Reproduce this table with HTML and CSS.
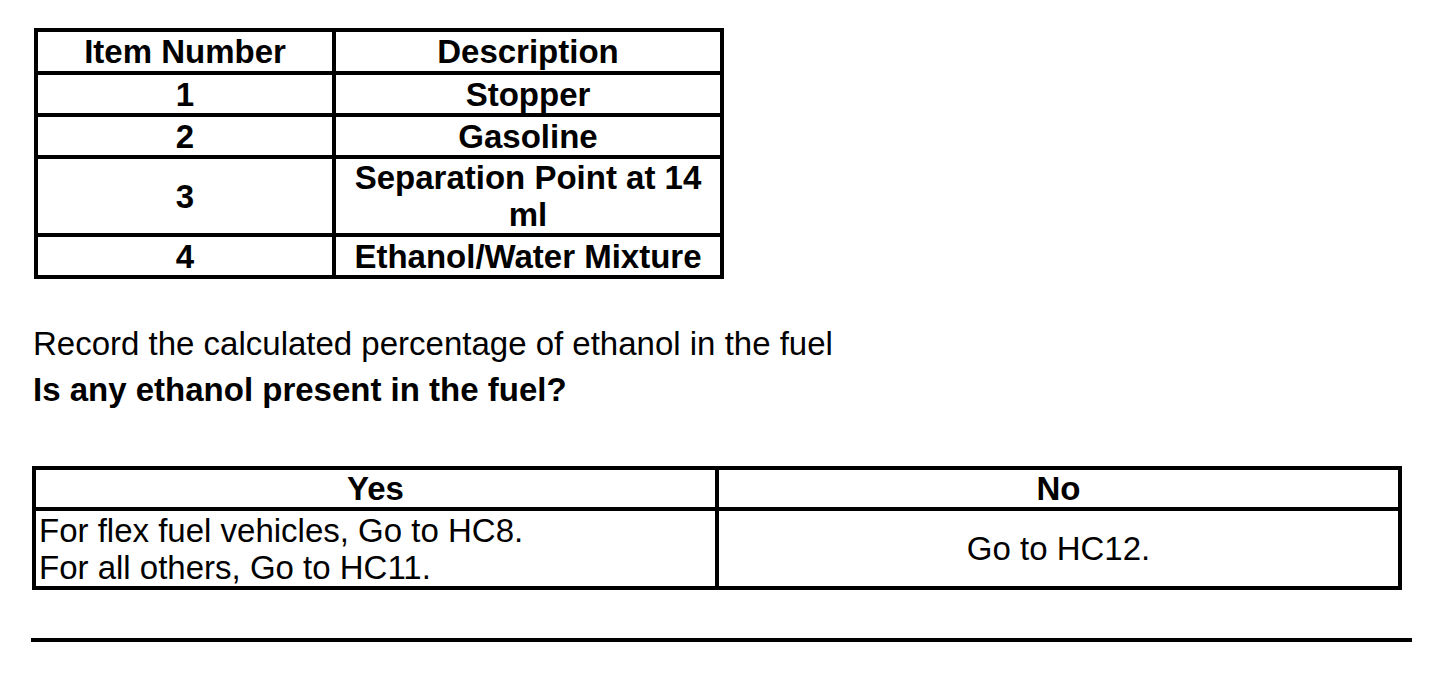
FILE: index.html
```html
<!DOCTYPE html>
<html lang="en">
<head>
<meta charset="utf-8">
<title>Ethanol test</title>
<link rel="stylesheet" href="styles.css">
</head>
<body>
<div class="page">
  <table class="items">
    <colgroup><col class="c-num"><col class="c-desc"></colgroup>
    <thead>
      <tr><th>Item Number</th><th>Description</th></tr>
    </thead>
    <tbody>
      <tr><td>1</td><td>Stopper</td></tr>
      <tr><td>2</td><td>Gasoline</td></tr>
      <tr><td>3</td><td>Separation Point at 14 ml</td></tr>
      <tr><td>4</td><td>Ethanol/Water Mixture</td></tr>
    </tbody>
  </table>

  <p class="instr">Record the calculated percentage of ethanol in the fuel</p>
  <p class="question">Is any ethanol present in the fuel?</p>

  <table class="answers">
    <colgroup><col class="c-half"><col class="c-half"></colgroup>
    <thead>
      <tr><th>Yes</th><th>No</th></tr>
    </thead>
    <tbody>
      <tr>
        <td class="left">For flex fuel vehicles, Go to HC8.<br>For all others, Go to HC11.</td>
        <td>Go to HC12.</td>
      </tr>
    </tbody>
  </table>

  <div class="rule"></div>
</div>
</body>
</html>
```

FILE: styles.css
```css
html, body {
  margin: 0;
  padding: 0;
  background: #fff;
}

body {
  font-family: "Liberation Sans", Arial, sans-serif;
  color: #000;
  font-size: 33px;
  line-height: 37px;
}

.page {
  display: flex;
  flex-direction: column;
  align-items: flex-start;
  padding: 28px 0 0 34px;
}

table {
  border-collapse: collapse;
  table-layout: fixed;
}

th, td {
  border: 4px solid #000;
  padding: 0;
  text-align: center;
  vertical-align: middle;
  font-weight: bold;
}

.items {
  width: 686px;
}

.items .c-num {
  width: 298px;
}

.items .c-desc {
  width: 388px;
}

.items td,
.items th {
  height: 38px;
}

.items th {
  height: 39px;
}

.instr {
  margin: 46px 0 0 -1px;
  font-weight: normal;
}

.question {
  margin: 9px 0 0 -1px;
  font-weight: bold;
}

.answers {
  margin: 58px 0 0 -2px;
  width: 1366px;
}

.answers .c-half {
  width: 683px;
}

.answers th {
  height: 36px;
}

.answers td {
  font-weight: normal;
  height: 75px;
}

.answers td.left {
  text-align: left;
  padding-left: 3px;
}

.rule {
  margin: 48px 0 0 -3px;
  width: 1381px;
  height: 4px;
  background: #000;
}
```
